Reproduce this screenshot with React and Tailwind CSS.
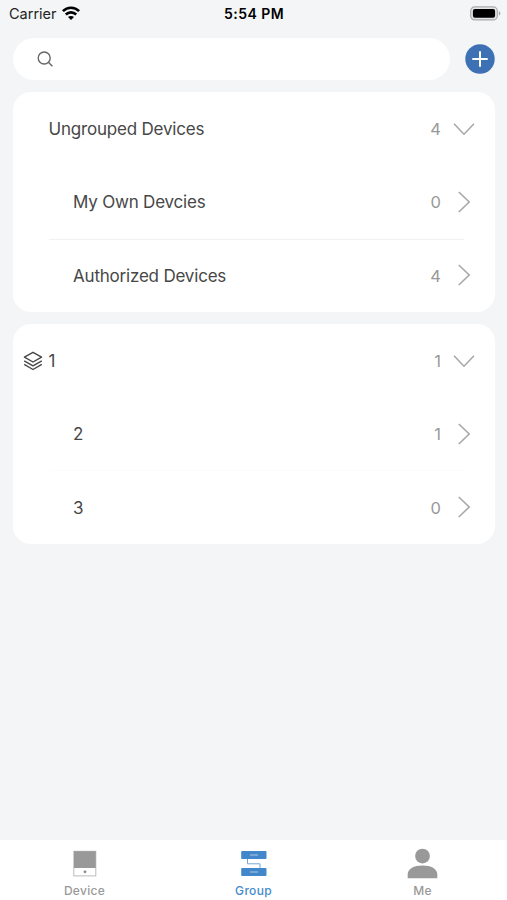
function Chevron({ down }) {
  return (
    <svg
      className={`block h-[22px] w-[22px] shrink-0 ${down ? "rotate-90" : ""}`}
      viewBox="0 0 22 22"
      fill="none"
      stroke="#a8a8a8"
      strokeWidth="1.6"
    >
      <path d="M5.8 1L16.2 11L5.8 21" />
    </svg>
  );
}

function LayersIcon() {
  return (
    <svg className="h-5 w-5 shrink-0" viewBox="0 0 20 20" fill="none" stroke="#484848" strokeWidth="1.4" strokeLinejoin="round">
      <path d="M10 1.3L18.6 6.2L10 11L1.4 6.2Z" />
      <path d="M1.2 9.8L10 14.8L18.8 9.8" />
      <path d="M1.2 13.4L10 18.5L18.8 13.4" />
    </svg>
  );
}

function Row({ label, count, header, icon, divider }) {
  return (
    <div className="relative flex h-[73.3px] items-center pr-5">
      <div className="flex w-9 shrink-0 items-center pl-[10.5px]">{icon}</div>
      <span
        className={`flex-1 pt-px text-[17px] leading-5 tracking-[-0.2px] text-[#474747] ${header ? "" : "pl-[24.5px]"}`}
      >
        {label}
      </span>
      <span className="mr-[11.5px] pt-px text-[16.5px] leading-5 text-[#999999]">{count}</span>
      <Chevron down={header} />
      {divider && <div className={`absolute right-[31px] -bottom-px left-9 h-px ${divider}`} />}
    </div>
  );
}

function Card({ children }) {
  return <section className="mx-[12.5px] mb-3 overflow-hidden rounded-[18px] bg-white">{children}</section>;
}

function StatusBar() {
  return (
    <header className="flex h-[27px] items-center pr-[6px] pl-[9px] text-black">
      <div className="flex flex-1 items-center gap-[5px]">
        <span className="text-[14.5px] leading-5 text-[#222]">Carrier</span>
        <svg className="mb-px h-[14px] w-[18px]" viewBox="0 0 18 14" fill="none" stroke="#000" strokeWidth="2.6">
          <path d="M.9 5.2C5.4.6 12.6.6 17.1 5.2" />
          <path d="M3.8 8.5C6.7 5.6 11.3 5.6 14.2 8.5" />
          <path d="M9 14L6 11C7.6 9.5 10.4 9.5 12 11Z" fill="#000" stroke="none" />
        </svg>
      </div>
      <span className="-translate-x-px text-[14px] leading-5 font-semibold tracking-[0.45px]">5:54 PM</span>
      <div className="flex flex-1 justify-end">
        <svg className="h-[15px] w-[31px]" viewBox="0 0 31 15">
          <rect x=".7" y=".9" width="26.6" height="13" rx="4" fill="#e5e6e7" stroke="#ababab" strokeWidth="1.2" />
          <rect x="2.9" y="3" width="22.2" height="8.8" rx="2" fill="#000" />
          <path d="M28.8 5.2C30.9 5.8 30.9 9 28.8 9.6Z" fill="#aaa" />
        </svg>
      </div>
    </header>
  );
}

function Tab({ label, active, children }) {
  return (
    <div className="flex flex-1 flex-col items-center pt-2">
      <svg className="h-8 w-8" viewBox="0 0 32 32">{children}</svg>
      <span
        className={`mt-[3px] text-[12px] leading-4 font-medium tracking-[0.3px] ${active ? "text-[#458bca]" : "text-[#999]"}`}
      >
        {label}
      </span>
    </div>
  );
}

export default function App() {
  return (
    <div className="flex h-[900px] w-[507px] flex-col overflow-hidden bg-[#f3f5f7] font-['Inter','Liberation_Sans',sans-serif]">
      <StatusBar />
      <div className="mt-[10.5px] mb-3 flex h-[42.5px] items-center pr-3 pl-[12.5px]">
        <div className="flex h-full flex-1 items-center rounded-full bg-white pl-6">
          <svg className="h-4 w-4" viewBox="0 0 16 16" fill="none" stroke="#666" strokeWidth="1.4">
            <circle cx="7.2" cy="7" r="6" />
            <path d="M11.6 11.4L15.4 15.2" />
          </svg>
        </div>
        <svg className="ml-[15.5px] h-[30px] w-[30px]" viewBox="0 0 30 30">
          <circle cx="15" cy="15" r="14.7" fill="#3e70b4" />
          <path d="M7.3 15H22.7M15 7.3V22.7" stroke="#fff" strokeWidth="2" />
        </svg>
      </div>
      <main className="flex-1">
        <Card>
          <Row header label="Ungrouped Devices" count="4" />
          <Row label="My Own Devcies" count="0" divider="bg-[#f1f1f1]" />
          <Row label="Authorized Devices" count="4" />
        </Card>
        <Card>
          <Row header label="1" count="1" icon={<LayersIcon />} />
          <Row label="2" count="1" divider="bg-[#fcfcfc]" />
          <Row label="3" count="0" />
        </Card>
      </main>
      <nav className="flex h-[60px] shrink-0 bg-white">
        <Tab label="Device">
          <rect x="4.8" y="3.3" width="22" height="24.6" fill="#fff" stroke="#bbb" strokeWidth="1" />
          <rect x="5" y="3.2" width="21.8" height="16.8" fill="#999" />
          <circle cx="16" cy="23.8" r="1.4" fill="#888" />
        </Tab>
        <Tab label="Group" active>
          <path d="M9.5 11V15.8H22V20" fill="none" stroke="#75a7d6" strokeWidth="1" />
          <rect x="3.2" y="3" width="25.3" height="8" rx="1" fill="#4287ca" />
          <rect x="3.2" y="20" width="25.3" height="8" rx="1" fill="#4287ca" />
          <path d="M12 7H20M12 24H20" stroke="#a9cbea" strokeWidth="1" />
        </Tab>
        <Tab label="Me">
          <circle cx="15.5" cy="8.1" r="7.4" fill="#999" />
          <path d="M.7 30.3V26.2C.7 20.8 6.9 17.4 15.5 17.4S30.3 20.8 30.3 26.2V30.3Z" fill="#999" />
        </Tab>
      </nav>
    </div>
  );
}
